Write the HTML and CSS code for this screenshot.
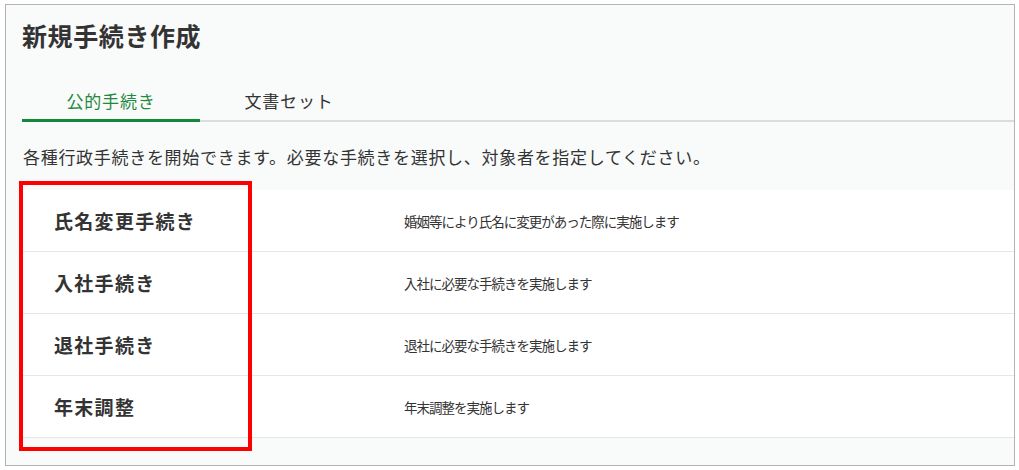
FILE: index.html
```html
<!DOCTYPE html>
<html lang="ja">
<head>
    <meta charset="UTF-8">
    <meta name="viewport" content="width=device-width, initial-scale=1.0">
    <title>新規手続き作成</title>
    <link rel="stylesheet" href="styles.css">
</head>
<body>
    <div class="panel">
        <div class="title">新規手続き作成</div>
        <div class="tabs">
            <div class="tab active">公的手続き</div>
            <div class="tab">文書セット</div>
        </div>
        <div class="lead">各種行政手続きを開始できます。必要な手続きを選択し、対象者を指定してください。</div>
        <div class="list">
            <div class="row">
                <div class="row-name">氏名変更手続き</div>
                <div class="row-desc">婚姻等により氏名に変更があった際に実施します</div>
            </div>
            <div class="row">
                <div class="row-name">入社手続き</div>
                <div class="row-desc">入社に必要な手続きを実施します</div>
            </div>
            <div class="row">
                <div class="row-name">退社手続き</div>
                <div class="row-desc">退社に必要な手続きを実施します</div>
            </div>
            <div class="row">
                <div class="row-name">年末調整</div>
                <div class="row-desc">年末調整を実施します</div>
            </div>
            <div class="highlight"></div>
        </div>
    </div>
</body>
</html>
```

FILE: styles.css
```css
body {
    font-family: "Noto Sans CJK JP", "Noto Sans", sans-serif;
    background-color: #fff;
    color: #333;
    margin: 0;
    padding: 0;
}
.panel {
    box-sizing: border-box;
    width: 1010px;
    height: 462px;
    margin: 4px 0 0 5px;
    background-color: #f9fafa;
    border: 1px solid #b4b4b4;
}
.title {
    padding: 13px 0 0 16px;
    font-size: 25px;
    line-height: 34px;
    font-weight: bold;
    letter-spacing: 0.6px;
}
.tabs {
    display: flex;
    margin: 28px 0 0 16px;
    box-shadow: inset 0 -2px 0 #dcdcdc;
}
.tab {
    width: 178px;
    padding: 9px 0 6px;
    border-bottom: 3px solid transparent;
    text-align: center;
    font-size: 17px;
    line-height: 24px;
    letter-spacing: 0.8px;
}
.tab.active {
    color: #1e8a3e;
    border-bottom-color: #14883a;
}
.lead {
    margin: 23px 0 0 17px;
    font-size: 17px;
    line-height: 24px;
    letter-spacing: 0.7px;
}
.list {
    position: relative;
    margin: 21px 0 0 16px;
    background-color: #fff;
}
.row {
    display: flex;
    align-items: center;
    height: 61px;
    border-bottom: 1px solid #e6e6e6;
}
.row-name {
    width: 350px;
    padding-left: 32px;
    font-size: 19px;
    font-weight: bold;
    letter-spacing: 1.3px;
}
.row-desc {
    font-size: 13.5px;
    letter-spacing: -1px;
}
.highlight {
    position: absolute;
    left: -3px;
    top: -9px;
    width: 225px;
    height: 262px;
    border: 4px solid #ff0000;
}
```
